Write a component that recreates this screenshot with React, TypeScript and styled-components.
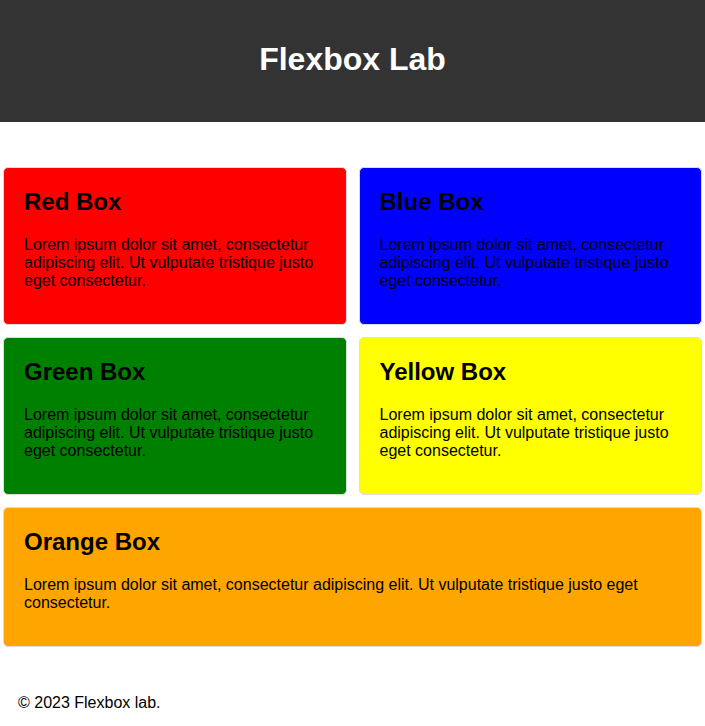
import React from "react";
import styled, { createGlobalStyle } from "styled-components";

const Global = createGlobalStyle`
  html, body { margin: 0; padding: 0; background: #fff; }
  body { font-family: "Liberation Sans", Arial, sans-serif; color: #000; }
`;

const Header = styled.header`
  height: 122px;
  background: #333;
  display: flex;
  align-items: center;
  justify-content: center;
`;

const Title = styled.h1`
  margin: 0 0 3px 0;
  color: #fff;
  font-size: 32px;
  font-weight: bold;
`;

const Grid = styled.main`
  display: flex;
  flex-wrap: wrap;
  gap: 12px;
  padding: 45px 3px 0 3px;
`;

const Box = styled.section<{ $bg: string; $full?: boolean }>`
  box-sizing: border-box;
  flex: ${(p) => (p.$full ? "1 1 100%" : "1 1 calc(50% - 6px)")};
  background: ${(p) => p.$bg};
  border: 1px solid #ddd;
  border-radius: 5px;
  padding: 20px 20px 18px 20px;
`;

const BoxTitle = styled.h2`
  margin: 0 0 20px 0;
  font-size: 24px;
  line-height: 28px;
  font-weight: bold;
`;

const BoxText = styled.p`
  margin: 0 0 16px 0;
  font-size: 16px;
  line-height: 18px;
`;

const Footer = styled.footer`
  padding: 47px 18px 16px 18px;
  font-size: 16px;
`;

const lorem =
  "Lorem ipsum dolor sit amet, consectetur adipiscing elit. Ut vulputate tristique justo eget consectetur.";

const boxes = [
  { name: "Red Box", bg: "#ff0000" },
  { name: "Blue Box", bg: "#0000ff" },
  { name: "Green Box", bg: "#008000" },
  { name: "Yellow Box", bg: "#ffff00" },
  { name: "Orange Box", bg: "#ffa500", full: true },
];

export default function App() {
  return (
    <>
      <Global />
      <Header>
        <Title>Flexbox Lab</Title>
      </Header>
      <Grid>
        {boxes.map((b) => (
          <Box key={b.name} $bg={b.bg} $full={b.full}>
            <BoxTitle>{b.name}</BoxTitle>
            <BoxText>{lorem}</BoxText>
          </Box>
        ))}
      </Grid>
      <Footer>© 2023 Flexbox lab.</Footer>
    </>
  );
}
